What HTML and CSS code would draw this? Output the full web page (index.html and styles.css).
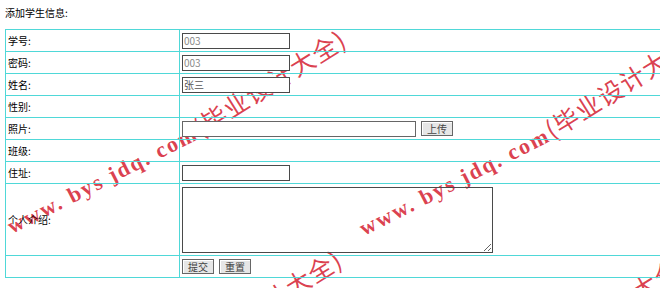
FILE: index.html
```html
<!DOCTYPE html>
<html lang="zh-CN">
<head>
<meta charset="utf-8">
<title>添加学生信息</title>
<link rel="stylesheet" href="styles.css">
</head>
<body>
<div class="page">
  <div class="wm-layer" aria-hidden="true">
    <span class="wm wm-a">www. bys jdq. com<span class="wm-cn">(毕业设计大全)</span></span>
    <span class="wm wm-b">www. bys jdq. com<span class="wm-cn">(毕业设计大全)</span></span>
    <span class="wm wm-c">www. bys jdq. com<span class="wm-cn">(毕业设计大全)</span></span>
    <span class="wm wm-d">www. bys jdq. com<span class="wm-cn">(毕业设计大全)</span></span>
  </div>
  <div class="content">
    <div class="title">添加学生信息:</div>
    <div class="form">
      <div class="cell lbl">学号:</div>
      <div class="cell val"><input class="txt" type="text" value="003" readonly></div>

      <div class="cell lbl">密码:</div>
      <div class="cell val"><input class="txt" type="text" value="003" readonly></div>

      <div class="cell lbl">姓名:</div>
      <div class="cell val"><input class="txt dark" type="text" value="张三"></div>

      <div class="cell lbl">性别:</div>
      <div class="cell val"></div>

      <div class="cell lbl">照片:</div>
      <div class="cell val"><input class="txt file" type="text" value=""><button class="btn gap" type="button">上传</button></div>

      <div class="cell lbl">班级:</div>
      <div class="cell val"></div>

      <div class="cell lbl">住址:</div>
      <div class="cell val"><input class="txt" type="text" value=""></div>

      <div class="cell lbl tall">个人介绍:</div>
      <div class="cell val tall"><textarea class="area"></textarea></div>

      <div class="cell lbl"></div>
      <div class="cell val"><button class="btn" type="button">提交</button><button class="btn gap" type="button">重置</button></div>
    </div>
  </div>
</div>
</body>
</html>
```
FILE: styles.css
```css
html, body {
  margin: 0;
  padding: 0;
  overflow: hidden;
  background: #fff;
}

body {
  font-family: "Noto Sans CJK SC", "Noto Sans", sans-serif;
  font-size: 10px;
  color: #000;
}

.page {
  position: relative;
  width: 660px;
  height: 288px;
  overflow: hidden;
}

.content {
  position: relative;
  z-index: 1;
  padding: 6px 0 0 5px;
}

.title {
  line-height: 14px;
  height: 14px;
}

.form {
  margin-top: 9px;
  display: grid;
  grid-template-columns: 174px 546px;
  width: 720px;
  border-top: 1px solid #4fd8d8;
  border-left: 1px solid #4fd8d8;
}

.cell {
  box-sizing: border-box;
  height: 22px;
  border-right: 1px solid #4fd8d8;
  border-bottom: 1px solid #4fd8d8;
  display: flex;
  align-items: center;
  padding-left: 2px;
}

.cell.tall {
  height: 72px;
}

.txt {
  box-sizing: border-box;
  width: 108px;
  height: 16px;
  margin: 0;
  padding: 0 0 0 1px;
  border: 1px solid #4a4a4a;
  background: #fff;
  font-family: "Noto Sans CJK SC", "Noto Sans", sans-serif;
  font-size: 10px;
  color: #8a8a8a;
  outline: none;
}

.txt.dark {
  color: #555;
}

.txt.file {
  width: 234px;
  border-color: #666;
}

.btn {
  box-sizing: border-box;
  width: 32px;
  height: 15px;
  margin: 0;
  padding: 0;
  border: 1px solid #666;
  background: #e6e6e6;
  box-shadow: inset 1px 1px 0 #fff;
  font-family: "Noto Sans CJK SC", "Noto Sans", sans-serif;
  font-size: 10px;
  line-height: 13px;
  color: #444;
}

.btn.gap {
  margin-left: 5px;
}

.area {
  box-sizing: border-box;
  width: 311px;
  height: 66px;
  margin: 0;
  padding: 1px;
  border: 1px solid #4a4a4a;
  background: transparent;
  font-size: 10px;
}

/* watermark behind the content */
.wm-layer {
  position: absolute;
  inset: 0;
  z-index: 0;
}

.wm {
  position: absolute;
  white-space: nowrap;
  transform-origin: 0 50%;
  transform: rotate(-27deg);
  line-height: 24px;
  font-family: "Liberation Serif", serif;
  font-weight: bold;
  font-size: 22px;
  letter-spacing: 2px;
  color: rgba(214, 40, 56, 0.88);
}

.wm-cn {
  display: inline-block;
  transform-origin: 0 70%;
  transform: rotate(-5deg);
  font-family: "Noto Sans CJK SC", sans-serif;
  font-weight: normal;
  font-size: 25px;
  letter-spacing: 1px;
}

.wm-a { left: 8px; top: 212px; }
.wm-b { left: 360px; top: 214px; }
.wm-c { left: 4px; top: 432px; }
.wm-d { left: 350px; top: 436px; }
```
